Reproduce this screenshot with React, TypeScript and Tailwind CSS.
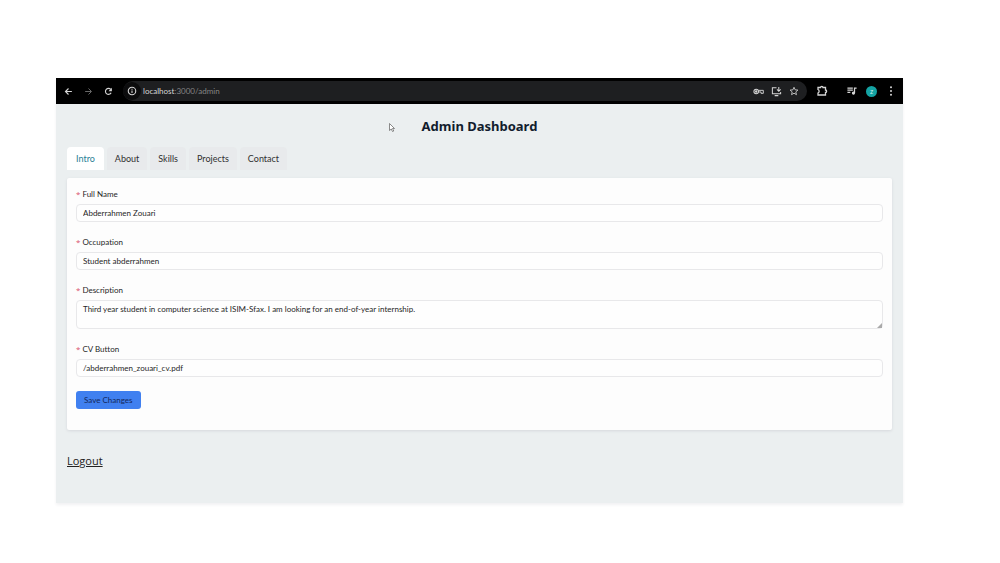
import { useState } from "react";
import type { ReactNode } from "react";

const tabs = ["Intro", "About", "Skills", "Projects", "Contact"];

const control =
  "block w-full rounded-[4px] border border-[#e8e8ea] bg-white/40 px-[6px] text-[8px] text-[#262626] outline-none";

function Glyph({ size, children, label }: { size: string; children: ReactNode; label: string }) {
  return (
    <svg
      viewBox="0 0 24 24"
      className={size}
      fill="none"
      stroke="currentColor"
      strokeWidth="2.6"
      aria-label={label}
      role="img"
    >
      {children}
    </svg>
  );
}

function BrowserBar() {
  return (
    <div className="flex h-[26px] items-center bg-black pl-[7px] pr-[7px] text-[#d6d6d6]">
      <button type="button" aria-label="Back" className="flex w-[10px] justify-center">
        <Glyph size="h-[9px] w-[9px]" label="Back">
          <path d="M21 12H5M12 4l-8 8 8 8" strokeWidth="3" />
        </Glyph>
      </button>
      <button type="button" aria-label="Forward" className="ml-[10px] flex w-[10px] justify-center text-[#6b6b6b]">
        <Glyph size="h-[9px] w-[9px]" label="Forward">
          <path d="M3 12h16M12 4l8 8-8 8" />
        </Glyph>
      </button>
      <button type="button" aria-label="Reload" className="ml-[10px] flex w-[10px] justify-center">
        <Glyph size="h-[9px] w-[9px]" label="Reload">
          <path d="M19 15.5A8 8 0 1 1 18 6.5" strokeWidth="3" />
          <path d="M21 2v9h-9z" fill="currentColor" stroke="none" />
        </Glyph>
      </button>
      <div className="ml-[10px] flex h-5 min-w-0 flex-1 items-center rounded-full bg-[#1e1f21] pr-[8px]">
        <span className="flex h-[18px] w-[18px] items-center justify-center rounded-full bg-[#0c0c0d]">
          <Glyph size="h-[10px] w-[10px]" label="Site information">
            <circle cx="12" cy="12" r="9" />
            <path d="M12 11v6M12 6.5v2.5" />
          </Glyph>
        </span>
        <span className="ml-[2px] flex-1 text-[8px] text-[#858585]">
          <span className="text-[#d6d6d6]">localhost</span>:3000/admin
        </span>
        <Glyph size="h-[11px] w-[11px]" label="Passwords">
          <circle cx="7" cy="12" r="5" strokeWidth="2.2" />
          <circle cx="7" cy="12" r="1.3" />
          <path d="M12 9.5h10.5v6.5h-5v-3H12" strokeWidth="2" />
        </Glyph>
        <span className="ml-[7px] flex">
          <Glyph size="h-[11px] w-[11px]" label="Install app">
            <path d="M12 4H3v13h18v-4M8 21h8M17 2v9M13 7.5l4 4 4-4" strokeWidth="2.2" />
          </Glyph>
        </span>
        <span className="ml-[7px] flex">
          <Glyph size="h-[10px] w-[10px]" label="Bookmark">
            <path
              d="M12 3l2.7 6.2 6.7.6-5.1 4.4 1.6 6.6L12 17.3l-5.9 3.5 1.6-6.6-5.1-4.4 6.7-.6z"
              strokeWidth="2"
            />
          </Glyph>
        </span>
      </div>
      <div className="ml-[9px] flex items-center">
        <Glyph size="h-[12px] w-[12px]" label="Extensions">
          <path d="M4 5h5c0-3 5-3 5 0h5v5c3 0 3 5 0 5v5H4v-4c3-1 3-6 0-7z" />
        </Glyph>
        <span className="ml-[19px] flex">
          <Glyph size="h-[10px] w-[10px]" label="Media">
            <path d="M1 5h13M1 10h13M1 15h7M18 17V5h5" strokeWidth="3" />
            <circle cx="15.5" cy="17" r="2.5" fill="currentColor" />
          </Glyph>
        </span>
        <span className="ml-[9px] flex h-[11px] w-[11px] items-center justify-center rounded-full bg-[#14a3a3] text-[7px] text-[#c9f0ee]">
          z
        </span>
        <span className="ml-[9px] flex">
          <Glyph size="h-[10px] w-[10px]" label="Menu">
            <g fill="currentColor" stroke="none">
              <circle cx="12" cy="3" r="2.4" />
              <circle cx="12" cy="12" r="2.4" />
              <circle cx="12" cy="21" r="2.4" />
            </g>
          </Glyph>
        </span>
      </div>
    </div>
  );
}

function Field({ id, label, children }: { id: string; label: string; children: ReactNode }) {
  return (
    <div className="flex flex-col gap-1">
      <label htmlFor={id} className="flex h-3 items-center gap-[2px] text-[8px] text-[#262626]">
        <span className="font-['Open_Sans','Noto_Sans',sans-serif] text-[#d9506a]">*</span>
        {label}
      </label>
      {children}
    </div>
  );
}

export default function App() {
  const [active, setActive] = useState("Intro");

  return (
    <div className="min-h-screen bg-white pb-[58px] pl-14 pr-[97px] pt-[78px] font-['Lato','Noto_Sans',sans-serif] [font-variant-ligatures:none]">
      <div className="bg-[#ebeff0] shadow-[0_2px_3px_#f1f1f3]">
        <BrowserBar />
        <main className="relative px-[11px] pb-8 pt-3">
          <svg viewBox="0 0 12 18" className="absolute left-[39.3%] top-[19px] h-[9px] w-[6px]" aria-hidden="true">
            <path d="M1 1v14l3.5-3 2.5 5 2.5-1-2.5-5H11z" fill="#fff" stroke="#666" strokeWidth="1.5" />
          </svg>
          <h1 className="text-center font-['Noto_Sans','Open_Sans',sans-serif] text-[13px] font-bold leading-5 text-[#111c2d]">
            Admin Dashboard
          </h1>
          <div role="tablist" className="mt-[11px] flex gap-[3px]">
            {tabs.map((tab) => (
              <button
                key={tab}
                type="button"
                role="tab"
                aria-selected={tab === active}
                onClick={() => setActive(tab)}
                className={
                  tab === active
                    ? "h-[23px] rounded-t-[4px] bg-white px-[9px] text-[9px] text-[#2a8096]"
                    : "h-[23px] rounded-t-[4px] bg-[#e8eaec] px-2 text-[9px] text-[#303030]"
                }
              >
                {tab}
              </button>
            ))}
          </div>
          <form
            onSubmit={(event) => event.preventDefault()}
            className="mt-2 flex flex-col gap-[14px] rounded-[2px] bg-[#fdfdfd] px-[9px] pb-[21px] pt-[10px] shadow-[0_1px_3px_#d5d8dc]"
          >
            <Field id="name" label="Full Name">
              <input id="name" defaultValue="Abderrahmen Zouari" className={`${control} h-[18px]`} />
            </Field>
            <Field id="occupation" label="Occupation">
              <input id="occupation" defaultValue="Student abderrahmen" className={`${control} h-[18px]`} />
            </Field>
            <Field id="description" label="Description">
              <div className="relative">
                <textarea
                  id="description"
                  defaultValue="Third year student in computer science at ISIM-Sfax. I am looking for an end-of-year internship."
                  className={`${control} h-[29px] resize-none overflow-hidden pt-[2px] leading-3`}
                />
                <svg
                  viewBox="0 0 6 6"
                  className="pointer-events-none absolute bottom-px right-px h-[5px] w-[5px]"
                  aria-hidden="true"
                >
                  <path d="M6 0v6H0z" fill="#aaa" />
                </svg>
              </div>
            </Field>
            <Field id="cv" label="CV Button">
              <input id="cv" defaultValue="/abderrahmen_zouari_cv.pdf" className={`${control} h-[18px]`} />
            </Field>
            <button
              type="submit"
              className="h-[18px] self-start rounded-[3px] bg-[#4080f0] px-2 text-[8px] text-[#13275a]"
            >
              Save Changes
            </button>
          </form>
          <a
            href="#logout"
            className="mt-[23px] inline-block font-['Open_Sans','Noto_Sans',sans-serif] text-[11px] leading-4 text-[#222] underline"
          >
            Logout
          </a>
        </main>
      </div>
    </div>
  );
}
